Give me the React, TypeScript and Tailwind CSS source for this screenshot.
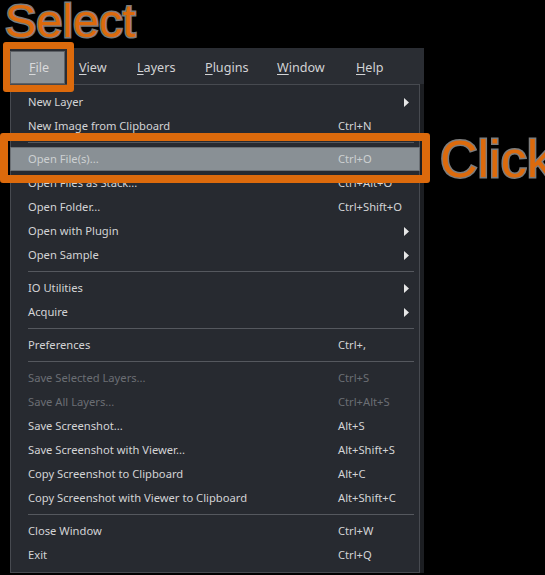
import React from "react";

type Item =
  | { kind: "sep" }
  | { kind: "item"; label: string; shortcut?: string; sub?: boolean; disabled?: boolean; active?: boolean };

const items: Item[] = [
  { kind: "item", label: "New Layer", sub: true },
  { kind: "item", label: "New Image from Clipboard", shortcut: "Ctrl+N" },
  { kind: "sep" },
  { kind: "item", label: "Open File(s)...", shortcut: "Ctrl+O", active: true },
  { kind: "item", label: "Open Files as Stack...", shortcut: "Ctrl+Alt+O" },
  { kind: "item", label: "Open Folder...", shortcut: "Ctrl+Shift+O" },
  { kind: "item", label: "Open with Plugin", sub: true },
  { kind: "item", label: "Open Sample", sub: true },
  { kind: "sep" },
  { kind: "item", label: "IO Utilities", sub: true },
  { kind: "item", label: "Acquire", sub: true },
  { kind: "sep" },
  { kind: "item", label: "Preferences", shortcut: "Ctrl+," },
  { kind: "sep" },
  { kind: "item", label: "Save Selected Layers...", shortcut: "Ctrl+S", disabled: true },
  { kind: "item", label: "Save All Layers...", shortcut: "Ctrl+Alt+S", disabled: true },
  { kind: "item", label: "Save Screenshot...", shortcut: "Alt+S" },
  { kind: "item", label: "Save Screenshot with Viewer...", shortcut: "Alt+Shift+S" },
  { kind: "item", label: "Copy Screenshot to Clipboard", shortcut: "Alt+C" },
  { kind: "item", label: "Copy Screenshot with Viewer to Clipboard", shortcut: "Alt+Shift+C" },
  { kind: "sep" },
  { kind: "item", label: "Close Window", shortcut: "Ctrl+W" },
  { kind: "item", label: "Exit", shortcut: "Ctrl+Q" },
];

// menubar labels: mnemonic letter, rest, width of the slot
const menus = [
  { m: "V", rest: "iew", w: "w-[58px]" },
  { m: "L", rest: "ayers", w: "w-[68px]" },
  { m: "P", rest: "lugins", w: "w-[72px]" },
  { m: "W", rest: "indow", w: "w-[79px]" },
  { m: "H", rest: "elp", w: "w-[50px]" },
];

const Arrow = () => (
  <svg width="5" height="9" viewBox="0 0 5 9" className="ml-auto mr-[10px]">
    <path d="M0 0 L5 4.5 L0 9 Z" fill="#e6e6e6" />
  </svg>
);

const App = () => {
  return (
    <div className="relative w-[545px] h-[575px] bg-black overflow-hidden font-['Noto_Sans',sans-serif]">
      {/* caption */}
      <div className="flex h-[48px] pl-[5px]">
        <div className="-mt-[3px] text-[47px] leading-none text-[#dc6a0c] font-['Liberation_Sans',Arial,sans-serif] [-webkit-text-stroke:3px_#7d7d7d] [paint-order:stroke_fill]">
          Select
        </div>
      </div>

      {/* menubar */}
      <div className="ml-[8px] w-[416px] h-[36px] bg-[#2a2d33] flex items-stretch text-[12.6px] text-[#d2d3d5]">
        <div className="ml-[2px] mt-[3px] w-[55px] bg-[#8e9397] border border-[#5d6166] flex items-center pl-[18px] pt-[2px] text-[#d9dadb]">
          <span>
            <span className="underline underline-offset-2">F</span>ile
          </span>
        </div>
        <div className="flex items-center pt-[5px] pl-[14px]">
          {menus.map((m) => (
            <span key={m.m} className={m.w}>
              <span className="underline underline-offset-2">{m.m}</span>
              {m.rest}
            </span>
          ))}
        </div>
      </div>

      {/* dropdown */}
      <div className="flex">
        <div className="ml-[10px] w-[410px] h-[489px] bg-[#272a30] border border-[#474a50] pt-[5px] text-[11.2px]">
          {items.map((it, i) =>
            it.kind === "sep" ? (
              <div key={i} className="h-[9px] pt-[4px] pl-[17px] pr-[5px]">
                <div className="h-px bg-[#55585e]" />
              </div>
            ) : (
              <div
                key={i}
                className={`h-[24px] flex items-center ${
                  it.active ? "bg-[#899095] border border-[#6b7075] text-[#cdd0d2] -mx-px pl-[17px]" : "pl-[17px]"
                } ${it.disabled ? "text-[#6b6e74]" : it.active ? "" : "text-[#d3d4d6]"}`}
              >
                <span className="w-[310px] shrink-0">{it.label}</span>
                {it.shortcut && <span>{it.shortcut}</span>}
                {it.sub && <Arrow />}
              </div>
            )
          )}
        </div>
        <div className="w-[4px] h-[489px] bg-[#1c1e22]" />
      </div>

      {/* callout frames */}
      <div className="absolute left-[3px] top-[42px] w-[71px] h-[50px] border-[7px] border-[#dc6a0c] rounded-[3px]" />
      <div className="absolute left-0 top-[133px] w-[430px] h-[50px] border-[8px] border-[#dc6a0c] rounded-[3px]" />
      <div className="absolute left-[440px] top-[133px] text-[52px] leading-none text-[#dc6a0c] font-['Liberation_Sans',Arial,sans-serif] [-webkit-text-stroke:3px_#7d7d7d] [paint-order:stroke_fill]">
        Click
      </div>
    </div>
  );
};

export default App;
